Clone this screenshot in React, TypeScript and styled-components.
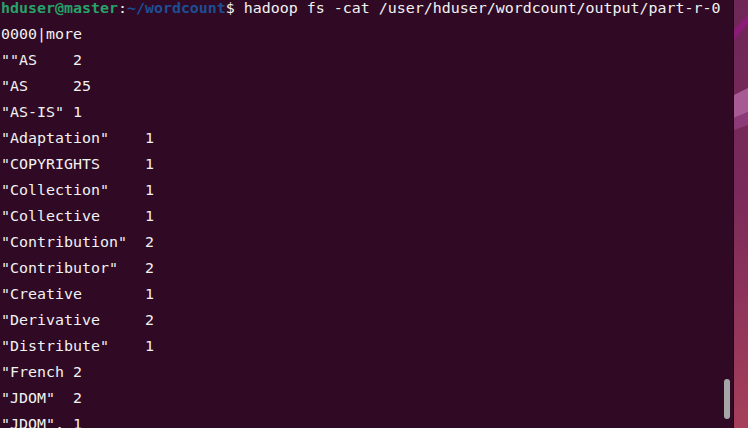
import React from "react";
import styled, { createGlobalStyle } from "styled-components";

const Global = createGlobalStyle`
  html, body { margin: 0; padding: 0; background: #300a24; overflow: hidden; }
  #root { width: 748px; height: 428px; }
`;

const Screen = styled.div`
  display: flex;
  width: 748px;
  height: 428px;
  overflow: hidden;
`;

const Terminal = styled.div`
  position: relative;
  flex: 0 0 733px;
  height: 428px;
  background: #300a24;
  overflow: hidden;
  border-right: 1px solid #1c0515;
`;

const Output = styled.pre`
  margin: -5px 0 0 1px;
  font-family: "DejaVu Sans Mono", "Liberation Mono", monospace;
  font-size: 14.95px;
  line-height: 26px;
  color: #f2f2f2;
  white-space: pre;
  tab-size: 8;
  -moz-tab-size: 8;
`;

const Line = styled.div`
  height: 26px;
`;

const Seg = styled.span<{ $tone?: "user" | "path" }>`
  color: ${(p) => (p.$tone === "user" ? "#26a269" : p.$tone === "path" ? "#1d4e94" : "inherit")};
  font-weight: ${(p) => (p.$tone ? 700 : 400)};
`;

const Scrollbar = styled.div`
  position: absolute;
  left: 724px;
  top: 379px;
  width: 6px;
  height: 40px;
  border-radius: 3px;
  background: #a6a6a6;
`;

const Wallpaper = styled.div`
  flex: 0 0 14px;
  height: 428px;
`;

const lines = [
  '0000|more',
  '""AS\t2',
  '"AS\t25',
  '"AS-IS"\t1',
  '"Adaptation"\t1',
  '"COPYRIGHTS\t1',
  '"Collection"\t1',
  '"Collective\t1',
  '"Contribution"\t2',
  '"Contributor"\t2',
  '"Creative\t1',
  '"Derivative\t2',
  '"Distribute"\t1',
  '"French\t2',
  '"JDOM"\t2',
  '"JDOM",\t1',
];

export default function App() {
  return (
    <>
      <Global />
      <Screen>
        <Terminal>
          <Output>
            <Line>
              <Seg $tone="user">hduser@master</Seg>
              <Seg>:</Seg>
              <Seg $tone="path">~/wordcount</Seg>
              <Seg>$ hadoop fs -cat /user/hduser/wordcount/output/part-r-0</Seg>
            </Line>
            {lines.map((l, i) => (
              <Line key={i}>{l}</Line>
            ))}
          </Output>
          <Scrollbar />
        </Terminal>
        <Wallpaper>
          <svg width="14" height="428" viewBox="0 0 14 428">
            <defs>
              <linearGradient id="wp" x1="0" y1="0" x2="0" y2="1">
                <stop offset="0" stopColor="#6e2757" />
                <stop offset="0.45" stopColor="#7a2a5a" />
                <stop offset="1" stopColor="#a63f5b" />
              </linearGradient>
            </defs>
            <rect width="14" height="428" fill="url(#wp)" />
            <polygon points="0,30 14,14 14,24 0,40" fill="#8a1c78" />
            <polygon points="0,95 14,88 14,112 0,118" fill="#a85a94" />
            <polygon points="0,118 14,112 14,125 0,130" fill="#8c3a78" />
          </svg>
        </Wallpaper>
      </Screen>
    </>
  );
}
